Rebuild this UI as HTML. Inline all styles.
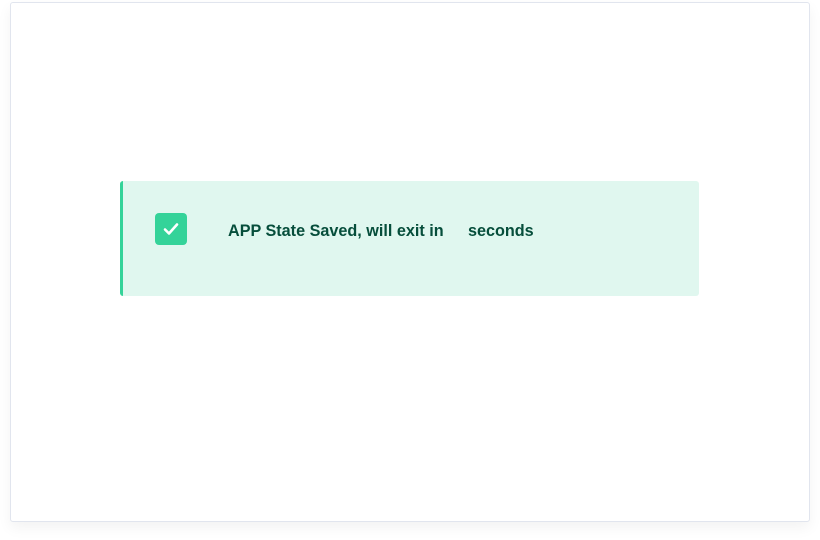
<!DOCTYPE html>
<html><head><style>
body{margin:0;width:820px;height:540px;background:#fff;position:relative;overflow:hidden;font-family:"Liberation Sans",sans-serif}
.card{position:absolute;left:10px;top:2px;width:798px;height:518px;border:1px solid #e1e5ee;border-radius:3px;background:#fff;box-shadow:0 6px 14px rgba(0,0,0,0.05)}
.toast{position:absolute;left:120px;top:181px;width:579px;height:115px;background:#e0f7ef;border-left:3px solid #34d399;border-radius:3px;box-sizing:border-box}
.ic{position:absolute;left:32px;top:32px;width:32px;height:32px;background:#34d399;border-radius:4px}
.t{position:absolute;top:41px;font-size:16.2px;font-weight:bold;color:#064e3b;white-space:pre}
</style></head><body>
<div class="card"></div>
<div class="toast"><div class="ic"><svg width="32" height="32"><path d="M10 16.5l4 4 8-9" stroke="#fff" stroke-width="2.6" fill="none" stroke-linecap="round" stroke-linejoin="round"/></svg></div>
<div class="t" style="left:105px">APP State Saved, will exit in</div>
<div class="t" style="left:345px">seconds</div></div>
</body></html>
